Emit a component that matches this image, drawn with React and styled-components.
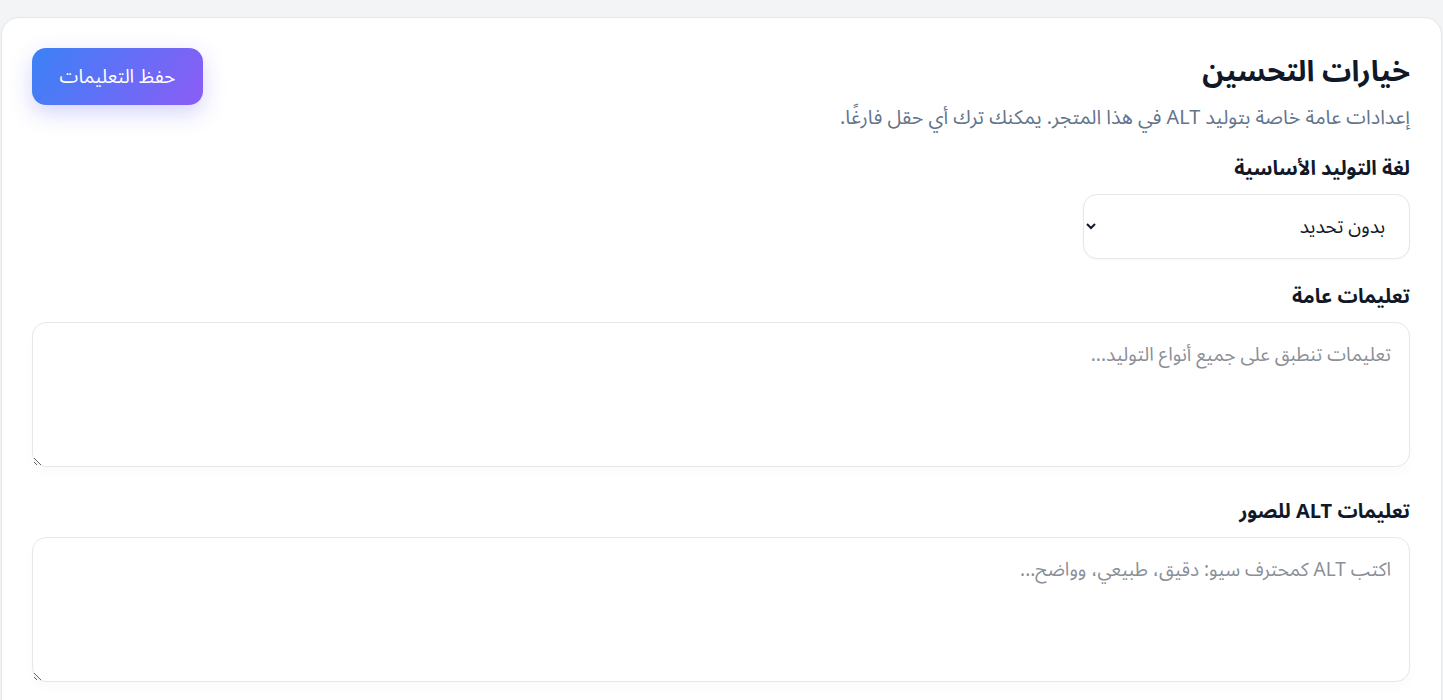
import React from "react";
import styled, { createGlobalStyle } from "styled-components";

const GlobalStyle = createGlobalStyle`
  html, body {
    margin: 0;
    padding: 0;
    background: #f3f4f6;
  }
  body {
    font-family: "Noto Sans Arabic", "DejaVu Sans", "Noto Sans", sans-serif;
  }
`;

const Page = styled.div`
  padding: 17px 1px 0;
  min-height: 700px;
  box-sizing: border-box;
`;

const Card = styled.section`
  direction: rtl;
  background: #ffffff;
  border: 1px solid #e5e7eb;
  border-radius: 18px;
  padding: 30px 31px 40px 30px;
  box-shadow: 0 1px 3px rgba(15, 23, 42, 0.04);
`;

const Header = styled.div`
  display: flex;
  justify-content: space-between;
  align-items: flex-start;
`;

const TitleBlock = styled.div`
  display: flex;
  flex-direction: column;
`;

const Title = styled.h2`
  margin: 4px 0 0;
  font-size: 29px;
  line-height: 40px;
  font-weight: 700;
  color: #111827;
`;

const Subtitle = styled.p`
  margin: 13px 0 0;
  font-size: 19.8px;
  line-height: 26px;
  color: #64748b;
`;

const SaveButton = styled.button`
  font-family: inherit;
  height: 57px;
  width: 171px;
  padding: 0;
  border: none;
  border-radius: 14px;
  color: #ffffff;
  font-size: 19px;
  background: linear-gradient(120deg, #3b82f6 0%, #8b5cf6 100%);
  box-shadow: 0 8px 22px rgba(99, 102, 241, 0.28);
  cursor: pointer;
`;

const Field = styled.div`
  margin-top: ${(p) => p.$gap}px;
`;

const Label = styled.label`
  display: block;
  font-size: 20px;
  line-height: 26px;
  font-weight: 700;
  color: #111827;
  margin-bottom: 12px;
`;

const Select = styled.select`
  display: block;
  width: 327px;
  height: 65px;
  padding: 0 20px 0 10px;
  font-family: inherit;
  font-size: 19px;
  color: #111827;
  background: #ffffff;
  border: 1px solid #e5e7eb;
  border-radius: 14px;
  box-shadow: 0 1px 2px rgba(15, 23, 42, 0.03);
`;

const TextArea = styled.textarea`
  display: block;
  box-sizing: border-box;
  width: 100%;
  height: 145px;
  padding: 18px 18px;
  font-family: inherit;
  font-size: 19px;
  line-height: 28px;
  color: #111827;
  background: #ffffff;
  border: 1px solid #e5e7eb;
  border-radius: 14px;
  box-shadow: 0 6px 12px rgba(15, 23, 42, 0.02);
  resize: vertical;
  outline: none;

  &::placeholder {
    color: #8b8f97;
  }
`;

export default function App() {
  return (
    <Page>
      <GlobalStyle />
      <Card>
        <Header>
          <TitleBlock>
            <Title>خيارات التحسين</Title>
            <Subtitle>
              إعدادات عامة خاصة بتوليد ALT في هذا المتجر. يمكنك ترك أي حقل فارغًا.
            </Subtitle>
          </TitleBlock>
          <SaveButton>حفظ التعليمات</SaveButton>
        </Header>

        <Field $gap={25}>
          <Label>لغة التوليد الأساسية</Label>
          <Select defaultValue="">
            <option value="">بدون تحديد</option>
            <option value="ar">العربية</option>
            <option value="en">English</option>
          </Select>
        </Field>

        <Field $gap={25}>
          <Label>تعليمات عامة</Label>
          <TextArea placeholder="تعليمات تنطبق على جميع أنواع التوليد..." />
        </Field>

        <Field $gap={32}>
          <Label>تعليمات ALT للصور</Label>
          <TextArea placeholder="اكتب ALT كمحترف سيو: دقيق، طبيعي، وواضح..." />
        </Field>
      </Card>
    </Page>
  );
}
